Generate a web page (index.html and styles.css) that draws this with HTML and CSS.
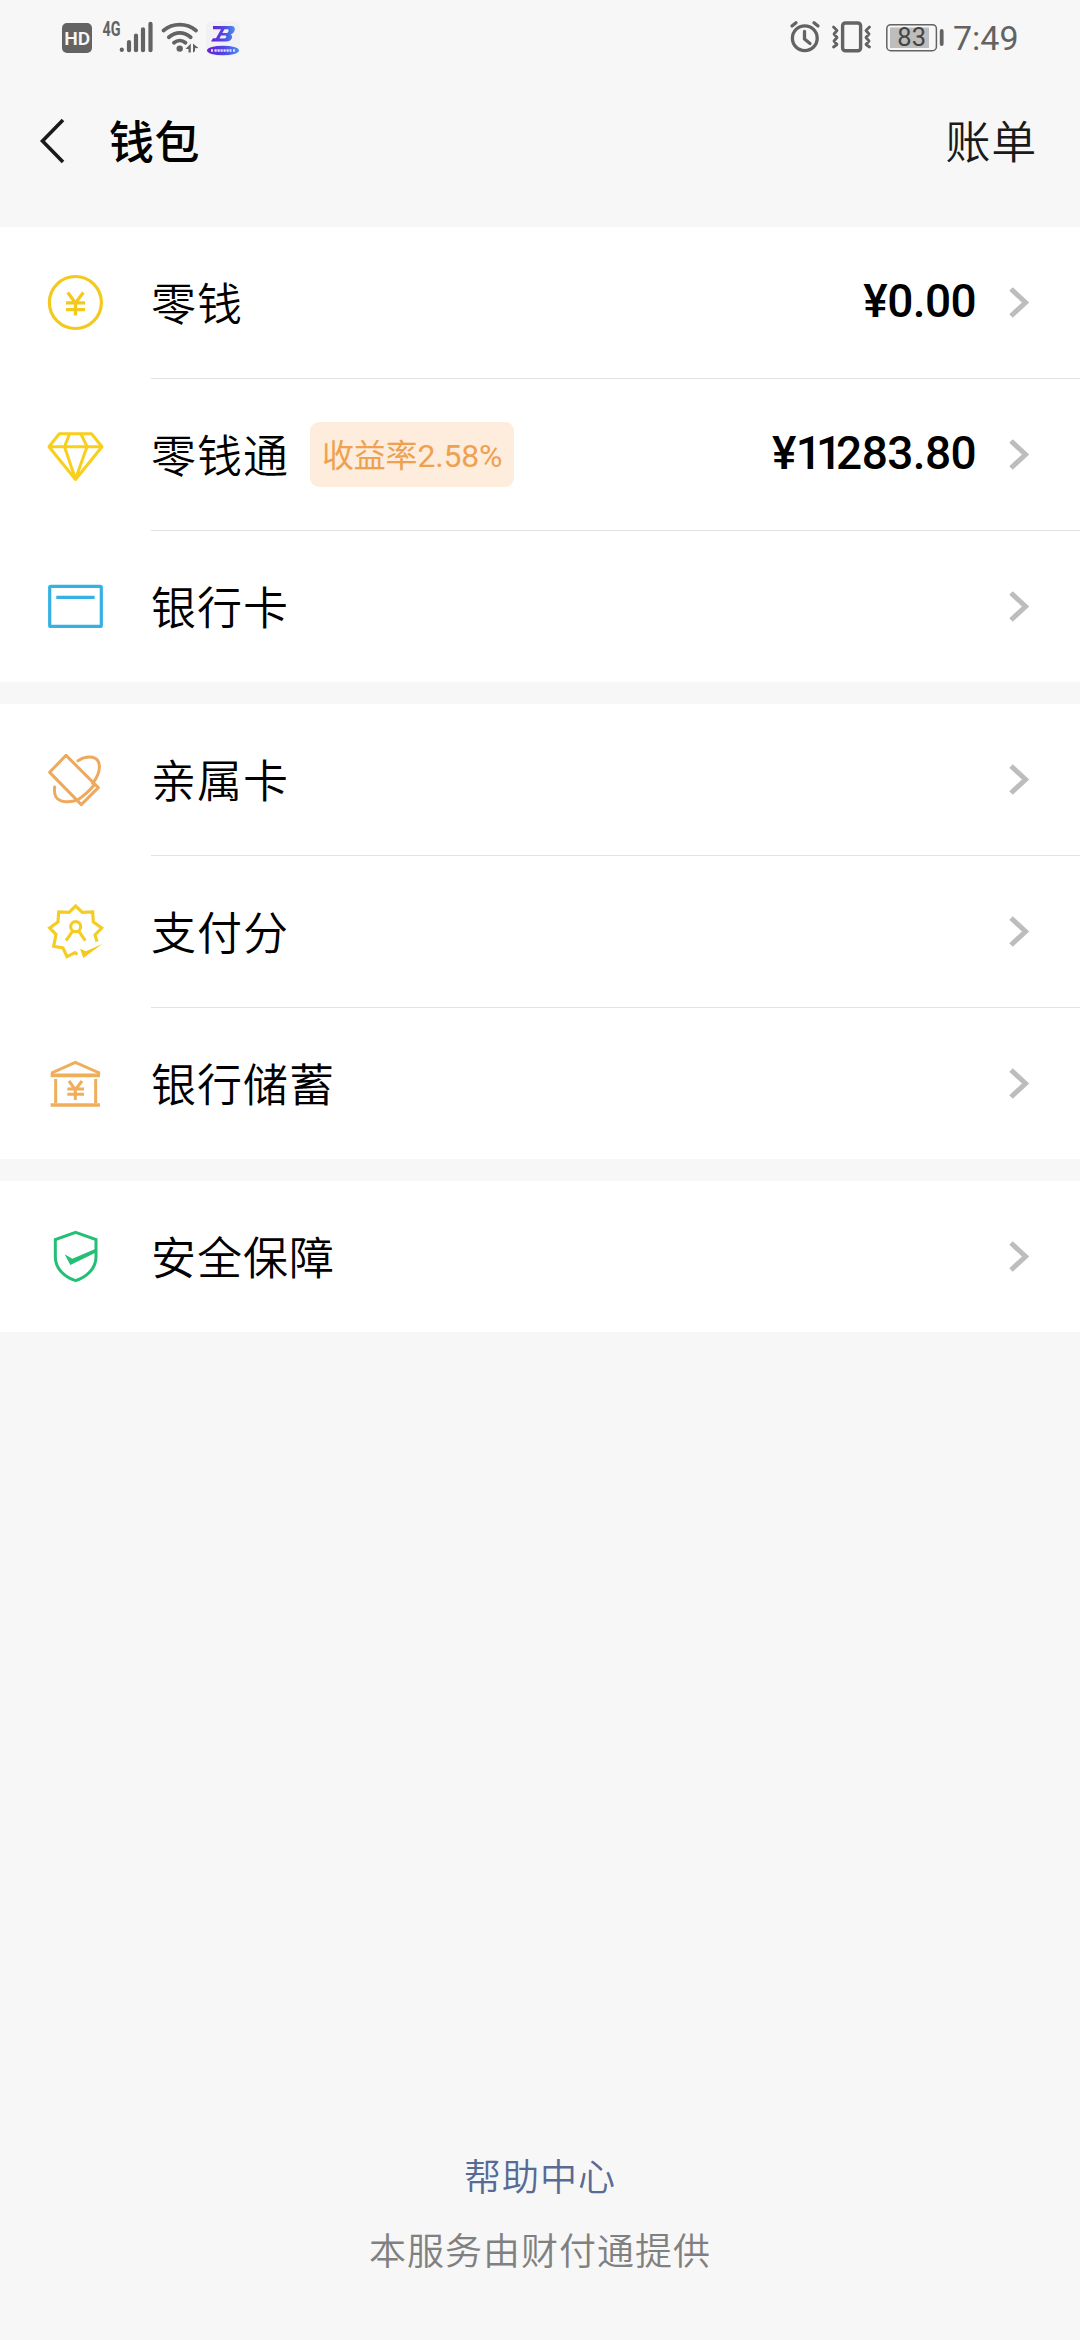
FILE: index.html
```html
<!DOCTYPE html>
<html lang="zh-CN">
<head>
<meta charset="utf-8">
<title>钱包</title>
<link rel="stylesheet" href="styles.css">
</head>
<body>
<div class="screen">
  <div class="status">
    <svg class="status-left" width="190" height="80" viewBox="56 0 190 80">
      <rect x="62" y="23" width="30" height="30" rx="5" fill="#636363"/>
      <text class="hd" x="64.200" y="45" textLength="26" lengthAdjust="spacingAndGlyphs">HD</text>
      <text class="net" x="102.5" y="35.8" textLength="18" lengthAdjust="spacingAndGlyphs">4G</text>
      <g stroke="#636363" stroke-width="4.2" stroke-linecap="round" fill="none">
        <path d="M121.8 49.6v.4M129 42v8.2M136 35.500v14.700M143 29.300v20.900M150.500 23.800v26.400"/>
        <path d="M163.500 30.500C173 22.600 186.500 22.600 196 30.500M168.800 37.200C175.500 31.500 184 31.500 190.700 37.200M174 42.700C177.500 39.800 182 39.800 185.500 42.700" stroke-width="3.8"/>
      </g>
      <circle cx="179.700" cy="48.600" r="3.200" fill="#636363"/>
      <path d="M185.500 49l5.300-5.500v9h-2.300v-3.500zM193 43.500v9l2-1.200v-3l3.500-.3z" fill="#636363"/>
      <defs>
        <linearGradient id="app" x1="0" y1="0" x2="1" y2="0"><stop offset="0" stop-color="#6a1fd0"/><stop offset=".55" stop-color="#5048e6"/><stop offset="1" stop-color="#4590ec"/></linearGradient>
      </defs>
      <rect x="206" y="21.500" width="34" height="34" rx="6" fill="#f0f0f5"/>
      <path d="M213 26h18.500c4 0 4.200 4.500 1.800 6.700c-1 1-1.800 1.400-2.800 1.700c3 1 2 7-4.500 7.200h-15l2-3.400h3l5-9h-8zM224.500 29.200l-2.200 3.800h4.200c2 0 3.200-3.800 1-3.800zM221 35.500l-1.500 2.900h5c2 0 2.500-2.900.5-2.900z" fill="url(#app)" fill-rule="evenodd"/>
      <ellipse cx="223" cy="50.500" rx="16" ry="4.800" fill="url(#app)"/>
      <path d="M211 50.500h2M214.500 50.500h17M233 50.500h2" stroke="#e6dcff" stroke-width="2.400" stroke-dasharray="2.200 .8"/>
    </svg>
    <svg class="status-right" width="240" height="80" viewBox="786 0 240 80">
      <g stroke="#636363" fill="none" stroke-linecap="round">
        <circle cx="804.800" cy="38.200" r="12.400" stroke-width="3.300"/>
        <path d="M804.500 31.500v7.500l5.500 4.500M792 26l4-3.300M818 26l-4-3.300" stroke-width="3.300"/>
        <rect x="842.600" y="23" width="18" height="27.800" rx="2.800" stroke-width="3.400"/>
        <path d="M833.500 27l3.500 3.500l-3 3.500l3 3.500l-3 3.500l3 3.500l-3.500 2.500M869.500 27l-3.500 3.500l3 3.500l-3 3.500l3 3.500l-3 3.500l3.500 2.500" stroke-width="2.800" stroke-linejoin="round"/>
        <rect x="886.800" y="24.700" width="49.600" height="26" rx="4" stroke-width="1.500"/>
        <path d="M941.700 31v13" stroke-width="3.800"/>
      </g>
      <rect x="890" y="27.500" width="39" height="20.500" fill="#bdbdbd"/>
      <text class="battery" x="897.300" y="46">83</text>
      <text class="clock" x="953" y="50">7:49</text>
    </svg>
  </div>

  <header class="navbar">
    <svg width="28" height="50" viewBox="0 0 28 50"><path d="M24 3L3.500 24L24 45" fill="none" stroke="#1a1a1a" stroke-width="3.600"/></svg>
    <h1>钱包</h1>
    <a class="bill">账单</a>
  </header>

  <main>
    <section class="group">
      <div class="row">
        <svg class="icon" viewBox="45 272 60 61" stroke="#f4c91d" stroke-width="3.200"><circle cx="75.400" cy="302.500" r="26"/><path d="M67.700 292.500l7.800 10.500l7.800-10.500M75.500 302v13.500M66 302.800h19M66 309.700h19"/></svg>
        <div class="cell"><span class="label">零钱</span><span class="amount">¥0.00</span><svg class="chevron" viewBox="0 0 20 32"><path d="M2 2L16.500 15.500L2 29"/></svg></div>
      </div>
      <div class="row">
        <svg class="icon" viewBox="45 424 60 61" stroke="#f8cf1b" stroke-width="3" stroke-linejoin="round"><path d="M59.300 433.800H91.500L102 446.700L75.500 479.500L49 446.700ZM49 446.700H102M69.500 434L64.500 446.700L75.500 479L87 446.700L81 434"/></svg>
        <div class="cell"><span class="label">零钱通</span><span class="tag">收益率2.58%</span><span class="amount">¥<span class="ones">11</span>283.80</span><svg class="chevron" viewBox="0 0 20 32"><path d="M2 2L16.500 15.500L2 29"/></svg></div>
      </div>
      <div class="row">
        <svg class="icon" viewBox="45 576 60 61" stroke="#36b1e4" stroke-width="3.200"><rect x="49.700" y="586.400" width="51.600" height="40" rx="1"/><path d="M56.300 597.300H94.600"/></svg>
        <div class="cell"><span class="label">银行卡</span><svg class="chevron" viewBox="0 0 20 32"><path d="M2 2L16.500 15.500L2 29"/></svg></div>
      </div>
    </section>

    <section class="group">
      <div class="row">
        <svg class="icon" viewBox="135 87 180 183" stroke="#efa95c" stroke-width="9" stroke-linecap="round" stroke-linejoin="round"><path d="M198 106L149 157L244 254L295 203ZM234 122C255 108 286 106 295 125C303 145 293 170 278 190M282 196C270 210 250 229 234 239C215 247 180 250 168 231C162 221 163 210 164 201"/></svg>
        <div class="cell"><span class="label">亲属卡</span><svg class="chevron" viewBox="0 0 20 32"><path d="M2 2L16.500 15.500L2 29"/></svg></div>
      </div>
      <div class="row">
        <svg class="icon" viewBox="135 543 180 183" stroke="#f5cd22" stroke-width="9.500"><path d="M291 665L285 645L305 624L280 606L278 576L247 577L227 558L207 577L176 576L174 606L149 624L168 643L161 679L189 684L201 710L225 698L232 704"/><circle cx="227" cy="620" r="15"/><path d="M219 632L198 662M235 632L256 662"/><path d="M240 686L250 714L308 671L258 694Z" fill="#f5c81d" stroke="none"/></svg>
        <div class="cell"><span class="label">支付分</span><svg class="chevron" viewBox="0 0 20 32"><path d="M2 2L16.500 15.500L2 29"/></svg></div>
      </div>
      <div class="row">
        <svg class="icon" viewBox="135 189 180 183" stroke="#efae5c" stroke-width="9"><path d="M157 256V248L226 217L296 248V256M167 267V340M287 267V340M207 273L226 299L246 273M226 297V330M202 297H252M202 313H252"/><path d="M152 256H300M152 345H300" stroke-width="11"/></svg>
        <div class="cell"><span class="label">银行储蓄</span><svg class="chevron" viewBox="0 0 20 32"><path d="M2 2L16.500 15.500L2 29"/></svg></div>
      </div>
    </section>

    <section class="group">
      <div class="row">
        <svg class="icon" viewBox="135 708 180 183" stroke="#23bf76" stroke-width="9"><path d="M227 727L288 749V800C288 838 256 863 227 872C197 863 166 838 166 800V749Z"/><path d="M194 793L211 825L291 786V775L217 806Z" fill="#23bf76" stroke="none"/></svg>
        <div class="cell"><span class="label">安全保障</span><svg class="chevron" viewBox="0 0 20 32"><path d="M2 2L16.500 15.500L2 29"/></svg></div>
      </div>
    </section>
  </main>

  <footer>
    <a class="help">帮助中心</a>
    <p>本服务由财付通提供</p>
  </footer>
</div>
</body>
</html>
```

FILE: styles.css
```css
* { box-sizing: border-box; }

body {
  margin: 0;
  background: #f7f7f7;
  color: #000;
  font-family: Roboto, "Noto Sans CJK SC", sans-serif;
}

.screen {
  width: 1080px;
  height: 2340px;
  display: flex;
  flex-direction: column;
}

.status {
  height: 80px;
  padding: 0 54px 0 56px;
  display: flex;
  justify-content: space-between;
}

.hd { font-size: 19px; font-weight: 600; fill: #f7f7f7; }
.net { font-size: 20px; font-weight: 700; fill: #636363; }
.battery { font-size: 25.5px; fill: #444; }
.clock { font-size: 34px; fill: #636363; }

.navbar {
  height: 147px;
  padding: 0 43px 24px 39px;
  display: flex;
  align-items: center;
  line-height: 60px;
}

.navbar h1 {
  margin: 0 auto 0 42px;
  padding-top: 4px;
  font-size: 45px;
  letter-spacing: 0.5px;
  font-weight: 500;
}

.bill {
  padding-top: 4px;
  font-size: 45px;
  font-weight: 350;
  letter-spacing: 0.7px;
  color: #1a1a1a;
}

.group {
  background: #fff;
  margin-bottom: 22px;
}

.row {
  display: flex;
  align-items: stretch;
  padding-left: 45px;
}

.icon {
  width: 60px;
  height: 61px;
  margin: 45px 46px 45px 0;
  fill: none;
  flex: none;
}

.cell {
  flex: 1;
  display: flex;
  align-items: center;
  padding-right: 51px;
}

.row:not(:last-child) .cell { border-bottom: 1px solid #e2e2e2; }
.row:not(:last-child) { height: 152px; }

.label {
  padding-top: 6px;
  font-size: 45px;
  font-weight: 350;
  letter-spacing: 1px;
  line-height: 60px;
}

.tag {
  margin-left: 21px;
  height: 65px;
  padding: 0 12px;
  border-radius: 9px;
  background: #feecdc;
  color: #eea14f;
  font-size: 32px;
  letter-spacing: -0.200px;
  line-height: 69px;
}

.amount {
  margin-left: auto;
  padding-bottom: 3px;
  font-size: 46px;
  letter-spacing: -0.600px;
  line-height: 60px;
  font-weight: 500;
}

.ones { letter-spacing: -6px; }

.chevron {
  width: 20px;
  height: 32px;
  margin-left: auto;
  fill: none;
  stroke: #bdbdbd;
  stroke-width: 5px;
  flex: none;
}

.amount + .chevron { margin-left: 33px; }

footer {
  margin-top: auto;
  padding-bottom: 59px;
  text-align: center;
  font-size: 37px;
  font-weight: 350;
  letter-spacing: 1px;
  line-height: 56px;
}

.help { display: block; color: #576b95; margin-bottom: 18px; }
footer p { margin: 0; color: #808080; }
```
